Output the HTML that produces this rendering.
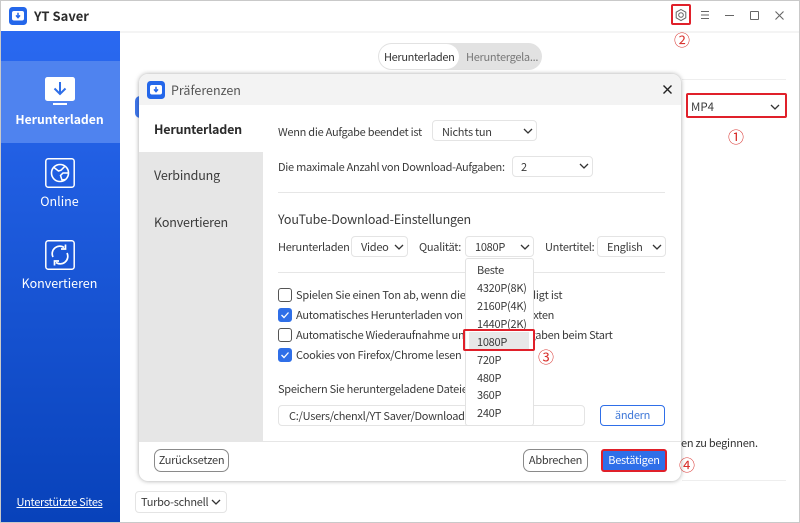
<!DOCTYPE html>
<html lang="de"><head><meta charset="utf-8"><title>YT Saver</title>
<style>
*{box-sizing:border-box;margin:0;padding:0}
html,body{width:800px;height:523px;overflow:hidden;background:#fff}
body{position:relative;font-family:"Noto Sans CJK SC","Liberation Sans",sans-serif;font-size:11px;letter-spacing:-.27px;color:#3a3a3a}
.a{position:absolute}
.t{position:absolute;white-space:nowrap;line-height:16px;height:16px}
.sel{position:absolute;background:#fff;border:1px solid #e4e4e4;border-radius:4px}
.chev{position:absolute;width:12px;height:8px}
.red{position:absolute;border:2px solid #e0202a;border-radius:2px}
.num{position:absolute;color:#d8322e;font-size:16px;letter-spacing:0;line-height:18px;white-space:nowrap}
.cb{position:absolute;left:278px;width:14px;height:14px;border-radius:3px;border:1px solid #555;background:#fff}
.cb.on{background:#2f6fe8;border-color:#2f6fe8}
.cb svg{position:absolute;left:1px;top:1px}
.btn{position:absolute;border:1px solid #8a8a8a;border-radius:7px;background:#fff;text-align:center;font-size:11px}
.m{position:absolute;left:477px;white-space:nowrap;line-height:16px;height:16px;font-size:11px}
.nav{position:absolute;white-space:nowrap;line-height:16px;height:16px;font-size:12.5px;letter-spacing:-.15px}
.side{position:absolute;left:0;width:119px;text-align:center;white-space:nowrap;line-height:16px;height:16px;color:#fff;font-size:12.5px;letter-spacing:0}
</style></head><body>

<!-- window frame -->
<div class="a" style="left:0;top:0;width:800px;height:523px;border:1px solid #c9c9c9;z-index:50;pointer-events:none"></div>

<!-- title bar -->
<div class="a" style="left:1px;top:31px;width:798px;height:2px;background:#f4f4f4"></div>
<svg class="a" style="left:9px;top:7px" width="18" height="18" viewBox="0 0 18 18">
<rect width="18" height="18" rx="3.5" fill="#2467ea"/><rect x="3" y="4" width="12" height="9.5" rx="2" fill="#fff"/>
<path d="M9 5.8v4.4M7 8.4l2 2.2 2-2.2" stroke="#2467ea" stroke-width="1.5" fill="none"/></svg>
<div class="t" style="left:34px;top:7px;font-size:13px;letter-spacing:.03px;font-weight:700;color:#2b2b2b;line-height:18px;height:18px">YT Saver</div>

<svg class="a" style="left:673px;top:7px" width="16" height="16" viewBox="0 0 16 16" fill="none" stroke="#666" stroke-width="1">
<path d="M8 2.5L12.8 5.2V10.8L8 13.5L3.2 10.8V5.2Z"/><circle cx="8" cy="8" r="2.3"/></svg>
<svg class="a" style="left:700px;top:10px" width="10" height="10" viewBox="0 0 10 10" stroke="#666" stroke-width="1.1"><path d="M1 1.5h8M1 5h8M1 8.5h8"/></svg>
<div class="a" style="left:725px;top:15px;width:9px;height:1px;background:#666"></div>
<div class="a" style="left:750px;top:11px;width:9px;height:9px;border:1.2px solid #666;border-radius:1px"></div>
<svg class="a" style="left:775px;top:11px" width="9" height="9" viewBox="0 0 9 9" stroke="#666" stroke-width="1.1"><path d="M.5.5l8 8M8.500.5l-8 8"/></svg>

<div class="red" style="left:671px;top:4px;width:20px;height:21px"></div>
<div class="num" style="left:674px;top:30px">②</div>

<!-- sidebar -->
<div class="a" style="left:1px;top:31px;width:119px;height:491px;background:linear-gradient(#2a69f1,#0842ba)"></div>
<div class="a" style="left:1px;top:61px;width:119px;height:82px;background:#4f83ef"></div>
<svg class="a" style="left:45px;top:77px" width="30" height="29" viewBox="0 0 30 29">
<rect width="30" height="24" rx="2.5" y="0" fill="#fff"/><rect x="8" y="26" width="14" height="2" fill="#fff"/>
<path d="M15 5v11.5M9.5 11.5l5.5 5.5 5.5-5.5" stroke="#2e6ee8" stroke-width="2" fill="none"/></svg>
<div class="side" style="top:111px;font-weight:700;font-size:12.2px">Herunterladen</div>

<svg class="a" style="left:45px;top:158px" width="30" height="30" viewBox="0 0 30 30" fill="none" stroke="#fff">
<rect x=".8" y=".8" width="28.4" height="28.4" rx="2.5" stroke-width="1.5"/>
<circle cx="15" cy="15" r="8.5" stroke-width="1.6"/>
<path d="M9 9.5l4.5 3.500 2.500-.8 3.500-3.500M23 15h-5l-2.500 2.500 1.500 4.500 3-.5" stroke-width="1.5"/></svg>
<div class="side" style="top:193px">Online</div>

<svg class="a" style="left:45px;top:240px" width="30" height="30" viewBox="0 0 30 30" fill="none" stroke="#fff">
<rect x=".8" y=".8" width="28.4" height="28.4" rx="2.5" stroke-width="1.5"/>
<path d="M8 17a7.500 7.500 0 0 1 11-9.500M22 13a7.500 7.500 0 0 1-11 9.500" stroke-width="1.7"/>
<path d="M20.500 4.500v4.500h-4.500M9.500 25.500v-4.500h4.500" stroke-width="1.7"/></svg>
<div class="side" style="top:275px">Konvertieren</div>

<div class="side" style="top:494px;font-size:11px;letter-spacing:-.3px;text-decoration:underline">Unterstützte Sites</div>

<!-- tab pill -->
<div class="a" style="left:378px;top:43px;width:164px;height:27px;background:#e2e2e2;border-radius:14px"></div>
<div class="a" style="left:379px;top:44px;width:80px;height:25px;background:#fff;border-radius:13px"></div>
<div class="t" style="left:384px;top:49px;letter-spacing:-.35px;color:#333">Herunterladen</div>
<div class="t" style="left:466px;top:49px;letter-spacing:-.3px;color:#777">Heruntergela...</div>

<!-- background main -->
<div class="a" style="left:682px;top:79px;width:104px;height:1px;background:#eee"></div>
<div class="a" style="left:135px;top:96px;width:10px;height:22px;background:#3f78ee;border-radius:5px"></div>
<div class="a" style="left:686px;top:94px;width:101px;height:24px;background:#fff"></div>
<div class="t" style="left:691px;top:99px;font-size:11.5px;letter-spacing:0">MP4</div>
<svg class="chev" style="left:769px;top:103px" viewBox="0 0 12 8" fill="none" stroke="#333" stroke-width="1.3"><path d="M2 2l4 4 4-4"/></svg>
<div class="red" style="left:686px;top:93px;width:101px;height:25px"></div>
<div class="num" style="left:728px;top:127px">①</div>
<div class="t" style="left:681px;top:435px;color:#333">en zu beginnen.</div>
<div class="a" style="left:682px;top:480px;width:104px;height:1px;background:#eee"></div>

<div class="sel" style="left:135px;top:491px;width:92px;height:22px"></div>
<div class="t" style="left:141px;top:494px">Turbo-schnell</div>
<svg class="chev" style="left:210px;top:498px" viewBox="0 0 12 8" fill="none" stroke="#333" stroke-width="1.3"><path d="M2 2l4 4 4-4"/></svg>

<!-- dialog -->
<div class="a" style="left:139px;top:74px;width:542px;height:407px;background:#fff;border-radius:9px;box-shadow:0 0 5px rgba(0,0,0,.35);overflow:hidden">
  <div class="a" style="left:0;top:0;width:542px;height:31px;background:#f3f3f3"></div>
  <div class="a" style="left:0;top:78px;width:124px;height:289px;background:#e6e6e6"></div>
  <div class="a" style="left:0;top:367px;width:542px;height:1px;background:#e6e6e6"></div>
</div>
<svg class="a" style="left:147px;top:81px" width="18" height="18" viewBox="0 0 18 18">
<rect width="18" height="18" rx="3.5" fill="#2467ea"/><rect x="3" y="4" width="12" height="9.5" rx="2" fill="#fff"/>
<path d="M9 5.8v4.4M7 8.4l2 2.2 2-2.2" stroke="#2467ea" stroke-width="1.5" fill="none"/></svg>
<div class="t" style="left:171px;top:82px;font-size:12.5px;letter-spacing:0;color:#555">Präferenzen</div>
<svg class="a" style="left:663px;top:85px" width="9" height="9" viewBox="0 0 9 9" stroke="#222" stroke-width="1.4"><path d="M.5.5l8 8M8.500.5l-8 8"/></svg>

<div class="nav" style="left:154px;top:121px;font-weight:700;letter-spacing:-.2px;color:#2b2b2b">Herunterladen</div>
<div class="nav" style="left:154px;top:167px">Verbindung</div>
<div class="nav" style="left:154px;top:214px">Konvertieren</div>

<div class="t" style="left:278px;top:124px">Wenn die Aufgabe beendet ist</div>
<div class="sel" style="left:432px;top:120px;width:105px;height:21px"></div>
<div class="t" style="left:442px;top:124px">Nichts tun</div>
<svg class="chev" style="left:522px;top:127px" viewBox="0 0 12 8" fill="none" stroke="#333" stroke-width="1.3"><path d="M2 2l4 4 4-4"/></svg>

<div class="t" style="left:278px;top:159px">Die maximale Anzahl von Download-Aufgaben:</div>
<div class="sel" style="left:512px;top:156px;width:81px;height:21px"></div>
<div class="t" style="left:521px;top:159px">2</div>
<svg class="chev" style="left:578px;top:162px" viewBox="0 0 12 8" fill="none" stroke="#333" stroke-width="1.3"><path d="M2 2l4 4 4-4"/></svg>

<div class="a" style="left:278px;top:192px;width:387px;height:1px;background:#e6e6e6"></div>
<div class="t" style="left:278px;top:211px;font-size:12.5px;letter-spacing:-.15px">YouTube-Download-Einstellungen</div>

<div class="t" style="left:278px;top:239px">Herunterladen</div>
<div class="sel" style="left:351px;top:236px;width:57px;height:21px"></div>
<div class="t" style="left:361px;top:239px">Video</div>
<svg class="chev" style="left:393px;top:243px" viewBox="0 0 12 8" fill="none" stroke="#333" stroke-width="1.3"><path d="M2 2l4 4 4-4"/></svg>
<div class="t" style="left:419px;top:239px">Qualität:</div>
<div class="sel" style="left:465px;top:236px;width:69px;height:21px"></div>
<div class="t" style="left:475px;top:239px">1080P</div>
<svg class="chev" style="left:519px;top:243px" viewBox="0 0 12 8" fill="none" stroke="#333" stroke-width="1.3"><path d="M2 2l4 4 4-4"/></svg>
<div class="t" style="left:545px;top:239px">Untertitel:</div>
<div class="sel" style="left:597px;top:236px;width:69px;height:21px"></div>
<div class="t" style="left:607px;top:239px">English</div>
<svg class="chev" style="left:651px;top:243px" viewBox="0 0 12 8" fill="none" stroke="#333" stroke-width="1.3"><path d="M2 2l4 4 4-4"/></svg>

<div class="a" style="left:278px;top:272px;width:387px;height:1px;background:#e6e6e6"></div>

<div class="cb" style="top:288px"></div>
<div class="t" style="left:296px;top:287px;letter-spacing:-.21px">Spielen Sie einen Ton ab, wenn die Aufgabe erledigt ist</div>
<div class="cb on" style="top:308px"><svg width="10" height="10" viewBox="0 0 10 10" fill="none" stroke="#fff" stroke-width="1.3"><path d="M1.5 5l2.5 2.5 4.5-5"/></svg></div>
<div class="t" style="left:296px;top:307px">Automatisches Herunterladen von Untertiteln/Texten</div>
<div class="cb" style="top:328px"></div>
<div class="t" style="left:296px;top:327px;letter-spacing:-.29px">Automatische Wiederaufnahme unerledigter Aufgaben beim Start</div>
<div class="cb on" style="top:348px"><svg width="10" height="10" viewBox="0 0 10 10" fill="none" stroke="#fff" stroke-width="1.3"><path d="M1.5 5l2.5 2.5 4.5-5"/></svg></div>
<div class="t" style="left:296px;top:347px">Cookies von Firefox/Chrome lesen</div>

<div class="t" style="left:278px;top:381px">Speichern Sie heruntergeladene Dateien in</div>
<div class="sel" style="left:278px;top:405px;width:307px;height:21px"></div>
<div class="t" style="left:289px;top:408px">C:/Users/chenxl/YT Saver/Download</div>
<div class="a" style="left:600px;top:405px;width:65px;height:21px;border:1.3px solid #2f6fe8;border-radius:4px;background:#fff;text-align:center;line-height:18px;color:#3f78d8">ändern</div>

<!-- dropdown -->
<div class="a" style="left:465px;top:258px;width:69px;height:168px;background:#fff;border:1px solid #e2e2e2;border-radius:3px"></div>
<div class="a" style="left:469px;top:332px;width:60px;height:18px;background:#e8e8e8"></div>
<div class="m" style="top:262px">Beste</div>
<div class="m" style="top:280px">4320P(8K)</div>
<div class="m" style="top:298px">2160P(4K)</div>
<div class="m" style="top:316px">1440P(2K)</div>
<div class="m" style="top:334px">1080P</div>
<div class="m" style="top:352px">720P</div>
<div class="m" style="top:370px">480P</div>
<div class="m" style="top:387px">360P</div>
<div class="m" style="top:405px">240P</div>
<div class="red" style="left:463px;top:329px;width:72px;height:22px"></div>
<div class="num" style="left:538px;top:347px">③</div>

<!-- footer -->
<div class="btn" style="left:154px;top:449px;width:75px;height:23px;line-height:21px">Zurücksetzen</div>
<div class="btn" style="left:523px;top:449px;width:65px;height:23px;line-height:21px">Abbrechen</div>
<div class="a" style="left:601px;top:449px;width:66px;height:23px;background:#2f6fe8;border:2px solid #e0202a;border-radius:3px;color:#fff;text-align:center;line-height:19px">Bestätigen</div>
<div class="num" style="left:679px;top:455px">④</div>

</body></html>
